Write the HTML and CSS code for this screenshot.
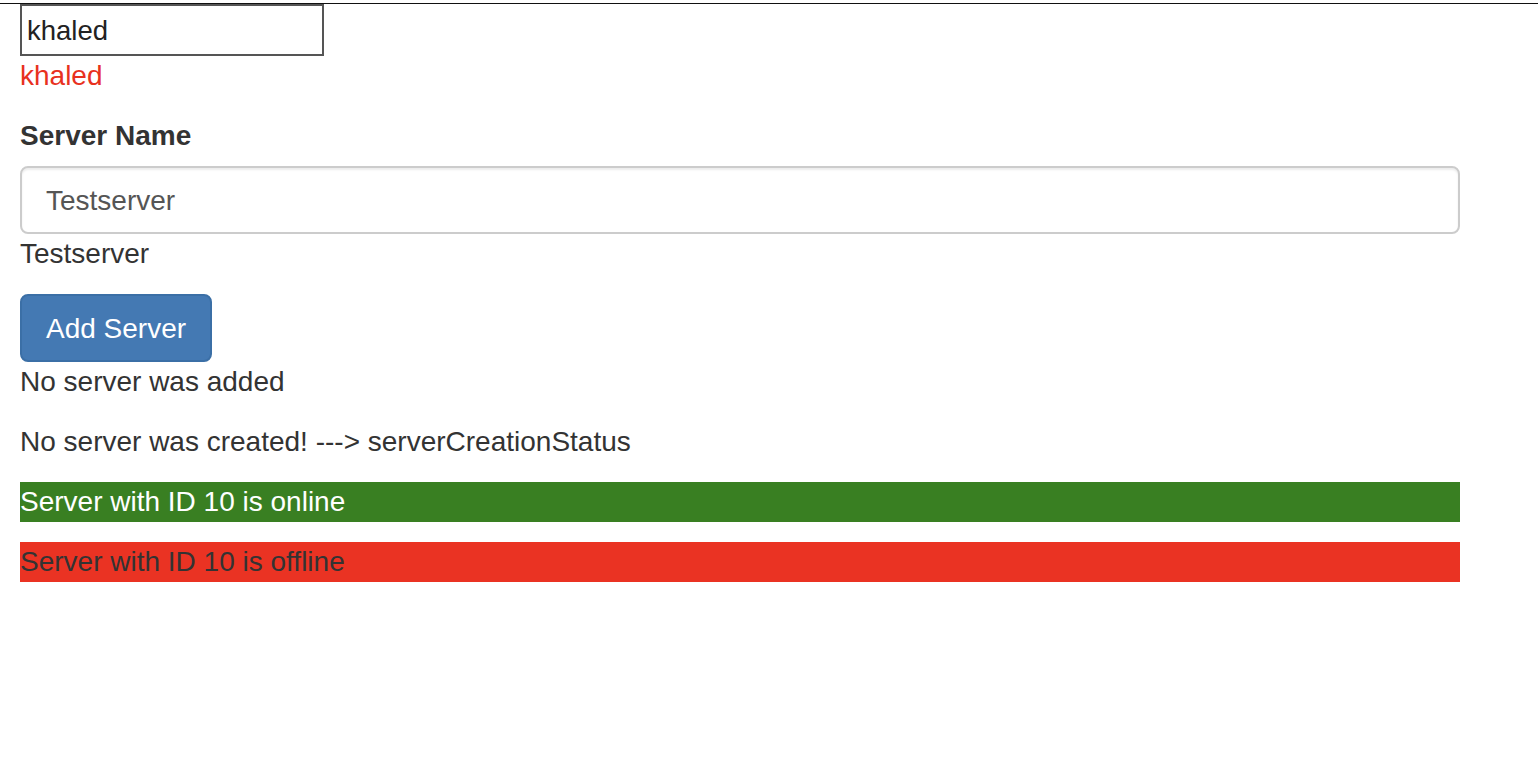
FILE: index.html
```html
<!DOCTYPE html>
<html>
<head>
<meta charset="utf-8">
<link rel="stylesheet" href="styles.css">
</head>
<body>
<div class="topline"></div>
<div class="container">
  <input class="plain-input" type="text" value="khaled">
  <p class="red-text">khaled</p>
  <div class="form-group">
    <label class="label">Server Name</label>
    <input class="form-control" type="text" value="Testserver">
  </div>
  <p class="text">Testserver</p>
  <button class="btn">Add Server</button>
  <p class="text">No server was added</p>
  <p class="text">No server was created! ---&gt; serverCreationStatus</p>
  <p class="bar online">Server with ID 10 is online</p>
  <p class="bar offline">Server with ID 10 is offline</p>
</div>
</body>
</html>
```

FILE: styles.css
```css
html, body {
  margin: 0;
  padding: 0;
  background: #fff;
}
body {
  font-family: "Liberation Sans", Arial, Helvetica, sans-serif;
  font-size: 28px;
  line-height: 40px;
  color: #333;
  padding-top: 3px;
}
.topline {
  height: 1px;
  background: #111;
}
.container {
  width: 1440px;
  margin-left: 20px;
  display: flex;
  flex-direction: column;
  align-items: flex-start;
}
.plain-input {
  box-sizing: border-box;
  width: 304px;
  height: 52px;
  border: 2px solid #555;
  padding: 2px 5px 0;
  margin: 0;
  font-family: "Liberation Sans", Arial, sans-serif;
  font-size: 27.5px;
  color: #222;
  outline: none;
}
.red-text {
  margin: 0 0 20px;
  color: #e8311e;
}
.form-group {
  width: 100%;
  display: flex;
  flex-direction: column;
}
.label {
  font-weight: bold;
  margin-bottom: 10px;
}
.form-control {
  box-sizing: border-box;
  width: 100%;
  height: 68px;
  border: 2px solid #ccc;
  border-radius: 8px;
  padding: 2px 24px 0;
  margin: 0;
  font-family: "Liberation Sans", Arial, sans-serif;
  font-size: 28px;
  color: #555;
  box-shadow: inset 0 2px 2px rgba(0,0,0,0.075);
  outline: none;
}
.text {
  margin: 0 0 20px;
}
.btn {
  box-sizing: border-box;
  height: 68px;
  padding: 2px 24px 0;
  border: 2px solid #3b6fa6;
  border-radius: 8px;
  background: #4479b3;
  color: #fff;
  font-family: "Liberation Sans", Arial, sans-serif;
  font-size: 28px;
  line-height: 40px;
  margin: 0;
  cursor: pointer;
}
.bar {
  width: 100%;
  margin: 0 0 20px;
}
.online {
  background: #397f22;
  color: #fff;
}
.offline {
  background: #ea3323;
  color: #333;
}
```
